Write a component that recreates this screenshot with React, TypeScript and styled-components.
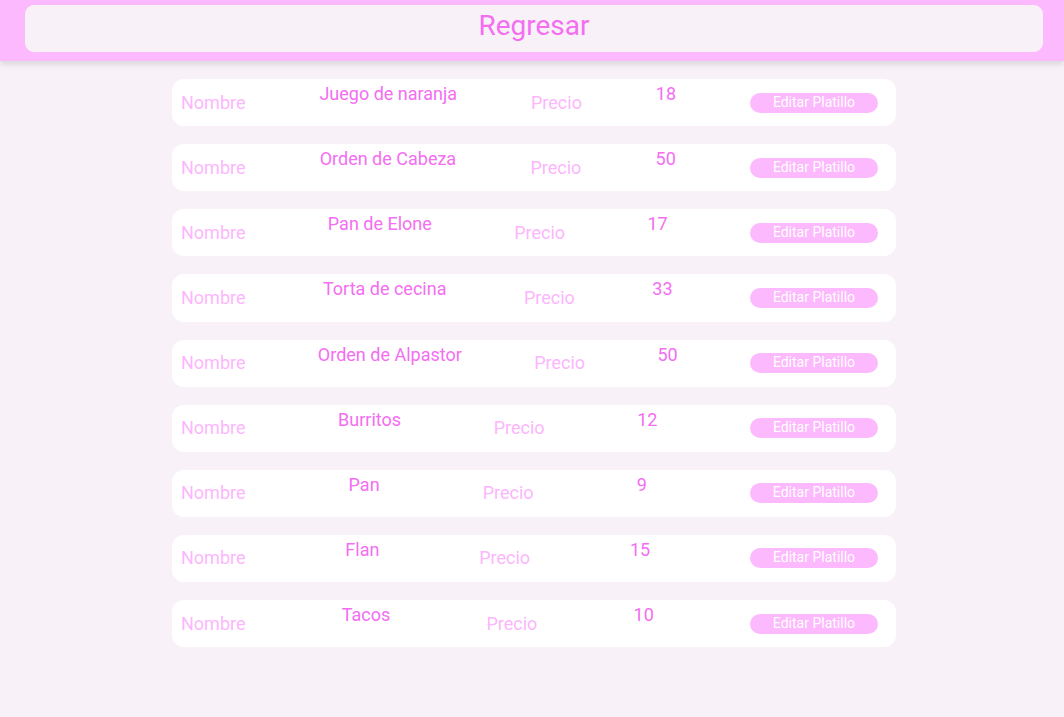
import React from "react";
import styled, { createGlobalStyle } from "styled-components";

const GlobalStyle = createGlobalStyle`
  html, body { margin: 0; padding: 0; background: #f8f2f8; }
  body { font-family: Roboto, "Liberation Sans", sans-serif; }
`;

const Page = styled.div`
  min-height: 717px;
  background: #f8f2f8;
`;

const Header = styled.header`
  background: #fdb9fd;
  padding: 5px 21px 9px 25px;
  box-shadow: 0 3px 6px rgba(0, 0, 0, 0.12);
`;

const BackButton = styled.button`
  display: block;
  width: 100%;
  height: 47px;
  border: none;
  border-radius: 9px;
  background: #f8f2f8;
  color: #f46ef2;
  font-family: Roboto, "Liberation Sans", sans-serif;
  font-size: 28px;
  line-height: 42px;
  padding: 0 0 5px;
  cursor: pointer;
`;

const Wrapper = styled.main`
  display: flex;
  justify-content: center;
  padding: 18px 0 0 4px;
`;

const List = styled.div`
  width: 724px;
  display: flex;
  flex-direction: column;
  gap: 18px;
`;

const Row = styled.div`
  height: 47.125px;
  background: #ffffff;
  border-radius: 12px;
  display: flex;
  align-items: center;
  justify-content: space-between;
  padding: 0 18px 0 9px;
  box-sizing: border-box;
`;

const Label = styled.span`
  color: #fdb6fd;
  font-size: 18px;
  line-height: 22px;
`;

const Value = styled.span`
  color: #f46ef2;
  font-size: 18px;
  line-height: 22px;
  margin-bottom: 17px;
`;

const EditButton = styled.button`
  width: 128px;
  height: 20px;
  border: none;
  border-radius: 10px;
  background: #fdb9fd;
  color: #ffffff;
  font-family: Roboto, "Liberation Sans", sans-serif;
  font-size: 14px;
  line-height: 19px;
  padding: 0 0 1px;
  cursor: pointer;
`;

const dishes = [
  { name: "Juego de naranja", price: 18 },
  { name: "Orden de Cabeza", price: 50 },
  { name: "Pan de Elone", price: 17 },
  { name: "Torta de cecina", price: 33 },
  { name: "Orden de Alpastor", price: 50 },
  { name: "Burritos", price: 12 },
  { name: "Pan", price: 9 },
  { name: "Flan", price: 15 },
  { name: "Tacos", price: 10 },
];

export default function App() {
  return (
    <Page>
      <GlobalStyle />
      <Header>
        <BackButton>Regresar</BackButton>
      </Header>
      <Wrapper>
        <List>
          {dishes.map((d) => (
            <Row key={d.name}>
              <Label>Nombre</Label>
              <Value>{d.name}</Value>
              <Label>Precio</Label>
              <Value>{d.price}</Value>
              <EditButton>Editar Platillo</EditButton>
            </Row>
          ))}
        </List>
      </Wrapper>
    </Page>
  );
}
